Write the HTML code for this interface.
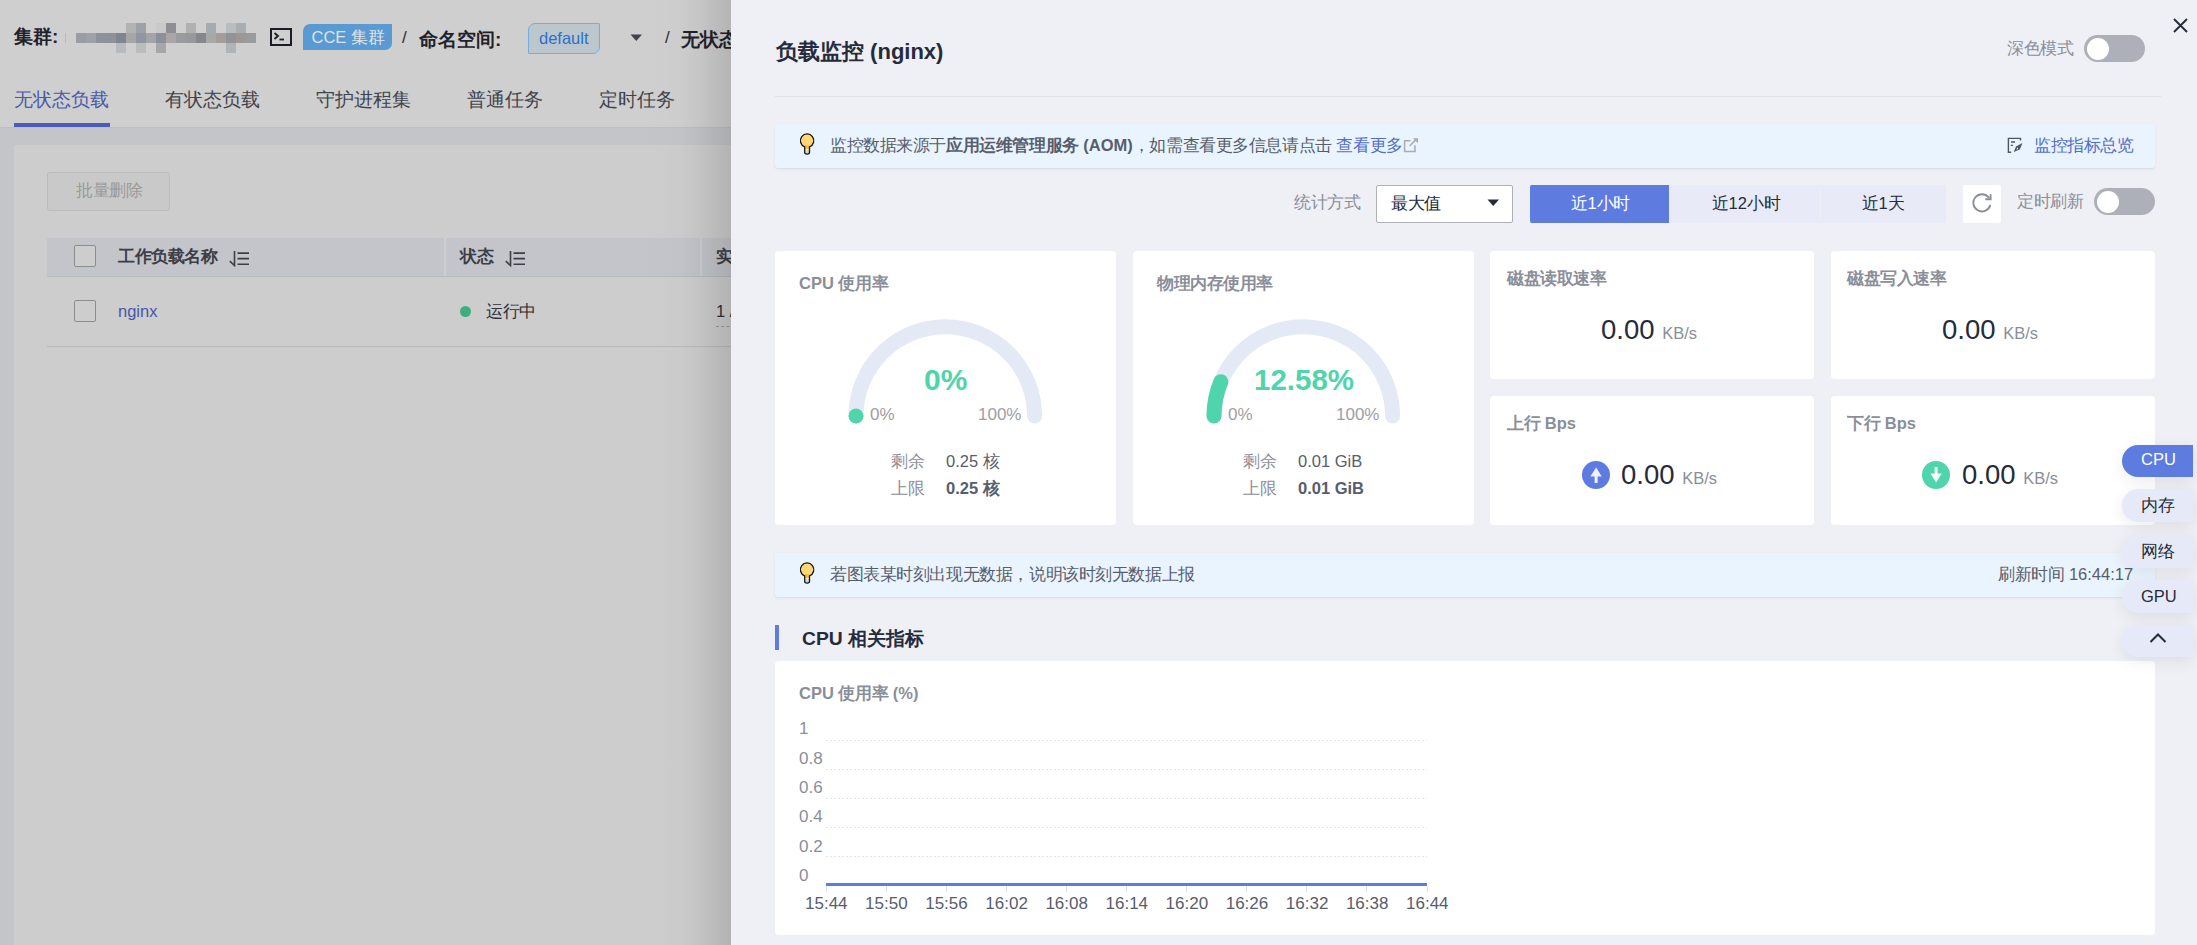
<!DOCTYPE html>
<html><head><meta charset="utf-8">
<style>
html,body{margin:0;padding:0;}
body{width:2197px;height:945px;overflow:hidden;position:relative;font-family:"Liberation Sans",sans-serif;background:#eff0f5;}
.a{position:absolute;}
.t{position:absolute;white-space:nowrap;line-height:1;}
.b{font-weight:bold;}
/* left page */
#left{position:absolute;left:0;top:0;width:731px;height:945px;background:#c4c5c9;overflow:hidden;}
#hdr{position:absolute;left:0;top:0;width:731px;height:127px;background:#cfcfcf;border-bottom:1px solid #bdbec2;}
.px{position:absolute;width:10px;height:10px;}
#card{position:absolute;left:14px;top:145px;width:740px;height:820px;background:#cdcdcd;}
/* drawer */
#drawer{position:absolute;left:731px;top:0;width:1466px;height:945px;background:#eff0f5;}
#shadow{position:absolute;left:620px;top:0;width:111px;height:945px;background:linear-gradient(to right,rgba(0,0,0,0) 0%,rgba(0,0,0,0.004) 36%,rgba(0,0,0,0.012) 54%,rgba(0,0,0,0.049) 72%,rgba(0,0,0,0.10) 90%,rgba(0,0,0,0.13) 100%);}
.card{position:absolute;background:#fff;border-radius:4px;}
.info{position:absolute;background:#eaf4fe;border-radius:3px;box-shadow:0 1px 2px rgba(80,100,160,0.15);}
.gray{color:#8a8e99;}
.dark{color:#252b3a;}
.mid{color:#575d6c;}
.pill{position:absolute;left:2122px;width:71px;height:32px;border-radius:16px 0 0 16px;background:#e6eaf8;box-shadow:0 4px 16px rgba(0,0,0,0.08);}
.c{letter-spacing:-0.42px;}
</style></head><body>
<div id="left">
  <div id="hdr">
    <div class="t b" style="left:14px;top:27px;font-size:19px;color:#1f222b;">集群:</div>
    <div class="a" style="left:65px;top:33px;width:1px;height:10px;background:#bcbcbc"></div>
<div class="px" style="left:76px;top:33px;background:#9a9ea4"></div>
<div class="px" style="left:86px;top:33px;background:#9ea1a6"></div>
<div class="px" style="left:96px;top:33px;background:#8e929b"></div>
<div class="px" style="left:106px;top:33px;background:#8d9199"></div>
<div class="px" style="left:116px;top:33px;background:#7f868f"></div>
<div class="px" style="left:126px;top:33px;background:#a5a6a8"></div>
<div class="px" style="left:136px;top:33px;background:#9095a0"></div>
<div class="px" style="left:146px;top:33px;background:#a3a4a6"></div>
<div class="px" style="left:156px;top:33px;background:#8b909a"></div>
<div class="px" style="left:166px;top:33px;background:#aba6a5"></div>
<div class="px" style="left:176px;top:33px;background:#9a9b9f"></div>
<div class="px" style="left:186px;top:33px;background:#98989b"></div>
<div class="px" style="left:196px;top:33px;background:#86878c"></div>
<div class="px" style="left:206px;top:33px;background:#a7a9a8"></div>
<div class="px" style="left:216px;top:33px;background:#a39d9b"></div>
<div class="px" style="left:226px;top:33px;background:#929396"></div>
<div class="px" style="left:236px;top:33px;background:#9d9796"></div>
<div class="px" style="left:246px;top:33px;background:#9a9b9d"></div>
<div class="px" style="left:126px;top:23px;background:#b3b3b3"></div>
<div class="px" style="left:136px;top:23px;background:#9ea1a6"></div>
<div class="px" style="left:156px;top:23px;background:#c8c9c8"></div>
<div class="px" style="left:166px;top:23px;background:#8e8f92"></div>
<div class="px" style="left:186px;top:23px;background:#b1b1b3"></div>
<div class="px" style="left:206px;top:23px;background:#a6abaf"></div>
<div class="px" style="left:226px;top:23px;background:#bbbcbf"></div>
<div class="px" style="left:236px;top:23px;background:#aaaeb1"></div>
<div class="px" style="left:116px;top:43px;background:#b6bbbf"></div>
<div class="px" style="left:136px;top:43px;background:#bbbdbc"></div>
<div class="px" style="left:156px;top:43px;background:#a7a6a8"></div>
<div class="px" style="left:226px;top:43px;background:#b0b4b7"></div>
    <svg class="a" style="left:270px;top:28px" width="22" height="18" viewBox="0 0 22 18"><rect x="1" y="1" width="20" height="16" fill="none" stroke="#1b1d24" stroke-width="2"/><path d="M4.5 5 L8 8 L4.5 11" fill="none" stroke="#1b1d24" stroke-width="1.8"/><path d="M9.5 11.5 H14" stroke="#1b1d24" stroke-width="1.8"/></svg>
    <div class="a" style="left:303px;top:24px;width:89px;height:26px;background:#5a9ad3;border-radius:7px 0 7px 0;"></div>
    <div class="t" style="left:311.5px;top:29px;font-size:16.5px;color:#dfe3e8;">CCE <span class="c">集群</span></div>
    <div class="t" style="left:402px;top:29px;font-size:17px;color:#2a2d35;">/</div>
    <div class="t b" style="left:419px;top:30px;font-size:19px;color:#1f222b;">命名空间:</div>
    <div class="a" style="left:528px;top:23px;width:70px;height:29px;background:#bcc7cd;border:1px solid #75ade0;border-radius:7px 1px 7px 1px;"></div>
    <div class="t" style="left:539px;top:30px;font-size:16.5px;color:#2a6fd0;">default</div>
    <svg class="a" style="left:630px;top:34px" width="13" height="8"><path d="M0.5 0.5 H12 L6.25 7 Z" fill="#3f434e"/></svg>
    <div class="t" style="left:665px;top:29px;font-size:17px;color:#2a2d35;">/</div>
    <div class="t b" style="left:681px;top:30px;font-size:19px;color:#1f222b;">无状态负载</div>
    <div class="t" style="left:14px;top:89.5px;font-size:19.25px;color:#4a5aa8;">无状态负载</div>
    <div class="t" style="left:165px;top:89.5px;font-size:19.25px;color:#3f434c;">有状态负载</div>
    <div class="t" style="left:316px;top:89.5px;font-size:19.25px;color:#3f434c;">守护进程集</div>
    <div class="t" style="left:467px;top:89.5px;font-size:19.25px;color:#3f434c;">普通任务</div>
    <div class="t" style="left:599px;top:89.5px;font-size:19.25px;color:#3f434c;">定时任务</div>
    <div class="a" style="left:14px;top:123px;width:96px;height:4px;background:#4a5cb8;"></div>
  </div>
  <div id="card">
    <div class="a" style="left:33px;top:27px;width:121px;height:37px;border:1px solid #bcbcbc;border-radius:3px;background:#c9c9c9;"></div>
    <div class="t" style="left:62px;top:37px;font-size:16.5px;color:#9a9a9a;"><span class="c">批量删除</span></div>
    <div class="a" style="left:33px;top:93px;width:720px;height:38px;background:#c3c5ca;border-bottom:1px solid #b8b9bd;"></div>
    <div class="a" style="left:430px;top:93px;width:2px;height:38px;background:#cdced1;"></div>
    <div class="a" style="left:686px;top:93px;width:2px;height:38px;background:#cdced1;"></div>
    <div class="a" style="left:60px;top:100px;width:20px;height:20px;border:1px solid #8c8d91;border-radius:2px;background:#cdcdcd;"></div>
    <div class="t b" style="left:104px;top:103px;font-size:16.5px;color:#3b3e46;"><span class="c">工作负载名称</span></div>
    <svg class="a" style="left:214px;top:104px" width="22" height="18" viewBox="0 0 22 18"><path d="M6.5 2 V16.5 L1.8 12.2" fill="none" stroke="#3b3e46" stroke-width="1.6"/><path d="M9.5 4.1 H21 M9.5 9.6 H21 M9.5 15.2 H21" stroke="#3b3e46" stroke-width="1.6"/></svg>
    <div class="t b" style="left:446px;top:103px;font-size:16.5px;color:#3b3e46;"><span class="c">状态</span></div>
    <svg class="a" style="left:490px;top:104px" width="22" height="18" viewBox="0 0 22 18"><path d="M6.5 2 V16.5 L1.8 12.2" fill="none" stroke="#3b3e46" stroke-width="1.6"/><path d="M9.5 4.1 H21 M9.5 9.6 H21 M9.5 15.2 H21" stroke="#3b3e46" stroke-width="1.6"/></svg>
    <div class="t b" style="left:702px;top:103px;font-size:16.5px;color:#3b3e46;"><span class="c">实例</span></div>
    <div class="a" style="left:60px;top:155px;width:20px;height:20px;border:1px solid #8c8d91;border-radius:2px;background:#cdcdcd;"></div>
    <div class="t" style="left:104px;top:158px;font-size:16.5px;color:#4857a8;">nginx</div>
    <div class="a" style="left:446px;top:161px;width:11px;height:11px;border-radius:50%;background:#3fae7e;"></div>
    <div class="t" style="left:472px;top:158px;font-size:16.5px;color:#2e3138;"><span class="c">运行中</span></div>
    <div class="t" style="left:702px;top:158px;font-size:16.5px;color:#2e3138;">1 / 1</div>
    <div class="a" style="left:702px;top:181px;width:40px;height:0;border-top:1px dashed #9a9a9a;"></div>
    <div class="a" style="left:33px;top:201px;width:720px;height:1px;background:#b8b9bd;"></div>
  </div>
</div>

<div id="shadow"></div>
<div id="drawer"></div>
<!-- header -->
<div class="t b dark" style="left:776px;top:41px;font-size:22px;">负载监控 (nginx)</div>
<div class="t gray" style="left:2007px;top:40px;font-size:16.5px;"><span class="c">深色模式</span></div>
<div class="a" style="left:2084px;top:35px;width:61px;height:27px;border-radius:14px;background:#adb0b8;"></div>
<div class="a" style="left:2087px;top:38px;width:22px;height:22px;border-radius:50%;background:#fff;"></div>
<svg class="a" style="left:2173px;top:18px" width="15" height="15" viewBox="0 0 15 15"><path d="M1 1 L14 14 M14 1 L1 14" stroke="#252b3a" stroke-width="1.9"/></svg>
<div class="a" style="left:775px;top:96px;width:1386px;height:1px;background:#dfe1e6;"></div>
<!-- info bar 1 -->
<div class="info" style="left:775px;top:124px;width:1380px;height:44px;"></div>
<svg class="a" style="left:794px;top:130px" width="26" height="28" viewBox="0 0 26 28"><path d="M10.7 16.9 A6.7 6.7 0 1 1 15.5 16.9 V22.6 Q15.5 24.1 13.1 24.1 Q10.7 24.1 10.7 22.6 Z" fill="#ffd777"/><rect x="11.1" y="15" width="4" height="4.3" fill="#ffc21a"/><rect x="10.7" y="19.3" width="4.8" height="0.7" fill="#fff"/><rect x="10.7" y="20" width="4.8" height="4.1" fill="#d9d9d9"/><path d="M10.7 16.9 A6.7 6.7 0 1 1 15.5 16.9 V22.6 Q15.5 24.1 13.1 24.1 Q10.7 24.1 10.7 22.6 Z" fill="none" stroke="#141414" stroke-width="1.3"/></svg>
<div class="t" style="left:830px;top:137px;font-size:16.5px;color:#575d6c;"><span class="c">监控数据来源于</span><b style="color:#575d6c"><span class="c">应用运维管理服务</span> (AOM)</b><span class="c">，如需查看更多信息请点击</span> <span style="color:#526ecc"><span class="c">查看更多</span></span></div>
<svg class="a" style="left:1400px;top:135px" width="20" height="20" viewBox="0 0 20 20"><path d="M10.4 5.8 H4.6 V16.5 H15 V10.3" fill="none" stroke="#a9abaf" stroke-width="1.5"/><path d="M10.1 10.5 L16 4.6" stroke="#a9abaf" stroke-width="1.5" stroke-linecap="round"/><path d="M13 3.2 H18 V8.2 Z" fill="#a9abaf"/></svg>
<svg class="a" style="left:2005px;top:135px" width="20" height="20" viewBox="0 0 20 20"><path d="M15.5 5.6 V3.4 H3.4 V17.2 H6.2" fill="none" stroke="#4f5563" stroke-width="1.4"/><path d="M6 7 H10 M5.8 10.4 H7.9" stroke="#4f5563" stroke-width="1.3"/><path d="M8.7 17 L11 11.6 L17.4 8 L14.8 14.5 Z" fill="#4f5563"/><path d="M11.2 14.6 L12.8 12.3 L13.1 14.2 Z" fill="#eaf4fe"/></svg>
<div class="t" style="left:2034px;top:137px;font-size:16.5px;color:#526ecc;"><span class="c">监控指标总览</span></div>
<!-- controls -->
<div class="t" style="left:1294px;top:194px;font-size:16.5px;color:#8a8e99;"><span class="c">统计方式</span></div>
<div class="a" style="left:1376px;top:185px;width:135px;height:36px;border:1px solid #adb0b8;border-radius:2px;background:#fff;"></div>
<div class="t" style="left:1391px;top:195px;font-size:16.5px;color:#252b3a;"><span class="c">最大值</span></div>
<svg class="a" style="left:1487px;top:199px" width="13" height="8"><path d="M0.5 0.5 H12 L6.25 7 Z" fill="#252b3a"/></svg>
<div class="a" style="left:1530px;top:185px;width:416px;height:38px;background:#e8ebf7;border-radius:2px;"></div>
<div class="a" style="left:1530px;top:185px;width:139px;height:38px;background:#5e7ce0;border-radius:2px 0 0 2px;"></div>
<div class="a" style="left:1820px;top:187px;width:1px;height:34px;background:#eef0f8;"></div>
<div class="t" style="left:1571px;top:195px;font-size:16.5px;color:#fff;"><span class="c">近</span>1<span class="c">小时</span></div>
<div class="t" style="left:1712px;top:195px;font-size:16.5px;color:#252b3a;"><span class="c">近</span>12<span class="c">小时</span></div>
<div class="t" style="left:1862px;top:195px;font-size:16.5px;color:#252b3a;"><span class="c">近</span>1<span class="c">天</span></div>
<div class="a" style="left:1963px;top:185px;width:38px;height:38px;background:#fff;border-radius:2px;"></div>
<svg class="a" style="left:1972px;top:193px" width="22" height="22" viewBox="0 0 22 22"><path d="M18.1 12.6 A8.6 8.6 0 1 1 16.6 4.3" fill="none" stroke="#8a8e99" stroke-width="1.9" stroke-linecap="round"/><path d="M13.3 6.3 H18.6 V1.3" fill="none" stroke="#8a8e99" stroke-width="1.9"/></svg>
<div class="t" style="left:2017px;top:193px;font-size:16.5px;color:#8a8e99;"><span class="c">定时刷新</span></div>
<div class="a" style="left:2094px;top:188px;width:61px;height:27px;border-radius:14px;background:#adb0b8;"></div>
<div class="a" style="left:2097px;top:191px;width:22px;height:22px;border-radius:50%;background:#fff;"></div>
<!-- cards -->
<div class="card" style="left:775px;top:251px;width:341px;height:274px;"></div>
<div class="card" style="left:1133px;top:251px;width:341px;height:274px;"></div>
<div class="card" style="left:1490px;top:251px;width:324px;height:128px;"></div>
<div class="card" style="left:1831px;top:251px;width:324px;height:128px;"></div>
<div class="card" style="left:1490px;top:396px;width:324px;height:129px;"></div>
<div class="card" style="left:1831px;top:396px;width:324px;height:129px;"></div>
<div class="t b gray" style="left:799px;top:275px;font-size:16.5px;">CPU <span class="c">使用率</span></div>
<div class="t b gray" style="left:1157px;top:275px;font-size:16.5px;"><span class="c">物理内存使用率</span></div>
<div class="t b gray" style="left:1507px;top:270px;font-size:16.5px;"><span class="c">磁盘读取速率</span></div>
<div class="t b gray" style="left:1847px;top:270px;font-size:16.5px;"><span class="c">磁盘写入速率</span></div>
<div class="t b gray" style="left:1507px;top:415px;font-size:16.5px;"><span class="c">上行</span> Bps</div>
<div class="t b gray" style="left:1847px;top:415px;font-size:16.5px;"><span class="c">下行</span> Bps</div>
<!-- gauges -->
<svg class="a" style="left:775px;top:251px" width="341" height="274" viewBox="0 0 341 274">
 <path d="M81 165 A89.3 89.3 0 0 1 259.6 165" fill="none" stroke="#e4e9f6" stroke-width="15" stroke-linecap="round"/>
 <circle cx="81" cy="165" r="7.5" fill="#50d4ab"/>
</svg>
<svg class="a" style="left:1133px;top:251px" width="341" height="274" viewBox="0 0 341 274">
 <path d="M81 165 A89.3 89.3 0 0 1 259.6 165" fill="none" stroke="#e4e9f6" stroke-width="15" stroke-linecap="round"/>
 <path d="M81 165 A89.3 89.3 0 0 1 87.8 130.8" fill="none" stroke="#50d4ab" stroke-width="15" stroke-linecap="round"/>
</svg>
<div class="t b" style="left:924px;top:365px;font-size:30px;color:#50d4ab;">0%</div>
<div class="t b" style="left:1254px;top:365px;font-size:29.5px;color:#50d4ab;">12.58%</div>
<div class="t" style="left:870px;top:406px;font-size:17px;color:#9d9ea2;">0%</div>
<div class="t" style="left:978px;top:406px;font-size:17px;color:#9d9ea2;">100%</div>
<div class="t" style="left:1228px;top:406px;font-size:17px;color:#9d9ea2;">0%</div>
<div class="t" style="left:1336px;top:406px;font-size:17px;color:#9d9ea2;">100%</div>
<div class="t gray" style="left:891px;top:453px;font-size:16.5px;"><span class="c">剩余</span></div>
<div class="t" style="left:946px;top:453px;font-size:16.5px;color:#575d6c;">0.25 <span class="c">核</span></div>
<div class="t gray" style="left:891px;top:480px;font-size:16.5px;"><span class="c">上限</span></div>
<div class="t b" style="left:946px;top:480px;font-size:16.5px;color:#575d6c;">0.25 <span class="c">核</span></div>
<div class="t gray" style="left:1243px;top:453px;font-size:16.5px;"><span class="c">剩余</span></div>
<div class="t" style="left:1298px;top:453px;font-size:16.5px;color:#575d6c;">0.01 GiB</div>
<div class="t gray" style="left:1243px;top:480px;font-size:16.5px;"><span class="c">上限</span></div>
<div class="t b" style="left:1298px;top:480px;font-size:16.5px;color:#575d6c;">0.01 GiB</div>
<!-- rate values -->
<div class="t dark" style="left:1601px;top:316px;font-size:27.5px;">0.00 <span style="font-size:16.5px;color:#8a8e99">KB/s</span></div>
<div class="t dark" style="left:1942px;top:316px;font-size:27.5px;">0.00 <span style="font-size:16.5px;color:#8a8e99">KB/s</span></div>
<div class="a" style="left:1582px;top:461px;width:28px;height:28px;border-radius:50%;background:#5e7ce0;"></div>
<svg class="a" style="left:1582px;top:461px" width="28" height="28" viewBox="0 0 28 28"><path d="M12.6 22 H15.6 V15.5 H19.8 L14.1 6.5 L8.4 15.5 H12.6 Z" fill="#eef1fb"/></svg>
<div class="t dark" style="left:1621px;top:461px;font-size:27.5px;">0.00 <span style="font-size:16.5px;color:#8a8e99">KB/s</span></div>
<div class="a" style="left:1922px;top:461px;width:28px;height:28px;border-radius:50%;background:#50d4ab;"></div>
<svg class="a" style="left:1922px;top:461px" width="28" height="28" viewBox="0 0 28 28"><path d="M12.6 6 H15.6 V12.5 H19.8 L14.1 21.5 L8.4 12.5 H12.6 Z" fill="#eefbf6"/></svg>
<div class="t dark" style="left:1962px;top:461px;font-size:27.5px;">0.00 <span style="font-size:16.5px;color:#8a8e99">KB/s</span></div>
<!-- info bar 2 -->
<div class="info" style="left:775px;top:553px;width:1380px;height:44px;"></div>
<svg class="a" style="left:794px;top:559px" width="26" height="28" viewBox="0 0 26 28"><path d="M10.7 16.9 A6.7 6.7 0 1 1 15.5 16.9 V22.6 Q15.5 24.1 13.1 24.1 Q10.7 24.1 10.7 22.6 Z" fill="#ffd777"/><rect x="11.1" y="15" width="4" height="4.3" fill="#ffc21a"/><rect x="10.7" y="19.3" width="4.8" height="0.7" fill="#fff"/><rect x="10.7" y="20" width="4.8" height="4.1" fill="#d9d9d9"/><path d="M10.7 16.9 A6.7 6.7 0 1 1 15.5 16.9 V22.6 Q15.5 24.1 13.1 24.1 Q10.7 24.1 10.7 22.6 Z" fill="none" stroke="#141414" stroke-width="1.3"/></svg>
<div class="t" style="left:830px;top:566px;font-size:16.5px;color:#575d6c;"><span class="c">若图表某时刻出现无数据，说明该时刻无数据上报</span></div>
<div class="t" style="left:1998px;top:566px;font-size:16.5px;color:#575d6c;"><span class="c">刷新时间</span> 16:44:17</div>
<!-- section -->
<div class="a" style="left:775px;top:625px;width:4px;height:25px;background:#5e7ce0;"></div>
<div class="t b dark" style="left:802px;top:629px;font-size:19.25px;">CPU 相关指标</div>
<div class="card" style="left:775px;top:661px;width:1380px;height:274px;"></div>
<div class="t b gray" style="left:799px;top:685px;font-size:16.5px;">CPU <span class="c">使用率</span> (%)</div>
<div class="a" style="left:826px;top:740px;width:601px;height:1px;background:repeating-linear-gradient(to right,#e2e4e9 0 2px,transparent 2px 4px);"></div>
<div class="a" style="left:826px;top:769px;width:601px;height:1px;background:repeating-linear-gradient(to right,#e2e4e9 0 2px,transparent 2px 4px);"></div>
<div class="a" style="left:826px;top:798px;width:601px;height:1px;background:repeating-linear-gradient(to right,#e2e4e9 0 2px,transparent 2px 4px);"></div>
<div class="a" style="left:826px;top:827px;width:601px;height:1px;background:repeating-linear-gradient(to right,#e2e4e9 0 2px,transparent 2px 4px);"></div>
<div class="a" style="left:826px;top:856px;width:601px;height:1px;background:repeating-linear-gradient(to right,#e2e4e9 0 2px,transparent 2px 4px);"></div>
<div class="t" style="left:799px;top:720.3px;font-size:17px;color:#8a8e99;">1</div>
<div class="t" style="left:799px;top:749.6px;font-size:17px;color:#8a8e99;">0.8</div>
<div class="t" style="left:799px;top:779.0px;font-size:17px;color:#8a8e99;">0.6</div>
<div class="t" style="left:799px;top:808.3px;font-size:17px;color:#8a8e99;">0.4</div>
<div class="t" style="left:799px;top:837.7px;font-size:17px;color:#8a8e99;">0.2</div>
<div class="t" style="left:799px;top:867.0px;font-size:17px;color:#8a8e99;">0</div>
<div class="a" style="left:826px;top:883px;width:601px;height:3px;background:#5e7ce0;"></div>
<div class="a" style="left:825.5px;top:886px;width:1px;height:6px;background:#dfe1e6;"></div>
<div class="t" style="left:805.0px;top:895px;font-size:17px;color:#575d6c;width:42px;text-align:center;">15:44</div>
<div class="a" style="left:885.6px;top:886px;width:1px;height:6px;background:#dfe1e6;"></div>
<div class="t" style="left:865.1px;top:895px;font-size:17px;color:#575d6c;width:42px;text-align:center;">15:50</div>
<div class="a" style="left:945.7px;top:886px;width:1px;height:6px;background:#dfe1e6;"></div>
<div class="t" style="left:925.2px;top:895px;font-size:17px;color:#575d6c;width:42px;text-align:center;">15:56</div>
<div class="a" style="left:1005.8px;top:886px;width:1px;height:6px;background:#dfe1e6;"></div>
<div class="t" style="left:985.3px;top:895px;font-size:17px;color:#575d6c;width:42px;text-align:center;">16:02</div>
<div class="a" style="left:1065.9px;top:886px;width:1px;height:6px;background:#dfe1e6;"></div>
<div class="t" style="left:1045.4px;top:895px;font-size:17px;color:#575d6c;width:42px;text-align:center;">16:08</div>
<div class="a" style="left:1126.0px;top:886px;width:1px;height:6px;background:#dfe1e6;"></div>
<div class="t" style="left:1105.5px;top:895px;font-size:17px;color:#575d6c;width:42px;text-align:center;">16:14</div>
<div class="a" style="left:1186.1px;top:886px;width:1px;height:6px;background:#dfe1e6;"></div>
<div class="t" style="left:1165.6px;top:895px;font-size:17px;color:#575d6c;width:42px;text-align:center;">16:20</div>
<div class="a" style="left:1246.2px;top:886px;width:1px;height:6px;background:#dfe1e6;"></div>
<div class="t" style="left:1225.7px;top:895px;font-size:17px;color:#575d6c;width:42px;text-align:center;">16:26</div>
<div class="a" style="left:1306.3px;top:886px;width:1px;height:6px;background:#dfe1e6;"></div>
<div class="t" style="left:1285.8px;top:895px;font-size:17px;color:#575d6c;width:42px;text-align:center;">16:32</div>
<div class="a" style="left:1366.4px;top:886px;width:1px;height:6px;background:#dfe1e6;"></div>
<div class="t" style="left:1345.9px;top:895px;font-size:17px;color:#575d6c;width:42px;text-align:center;">16:38</div>
<div class="a" style="left:1426.5px;top:886px;width:1px;height:6px;background:#dfe1e6;"></div>
<div class="t" style="left:1406.0px;top:895px;font-size:17px;color:#575d6c;width:42px;text-align:center;">16:44</div>
<!-- nav pills -->
<div class="pill" style="top:445px;background:#5e7ce0;"></div>
<div class="t" style="left:2141px;top:450.5px;font-size:16.5px;color:#fff;">CPU</div>
<div class="pill" style="top:489px;height:33px;"></div>
<div class="t" style="left:2141px;top:497px;font-size:16.5px;color:#252b3a;"><span class="c">内存</span></div>
<div class="pill" style="top:535px;height:33px;"></div>
<div class="t" style="left:2141px;top:543px;font-size:16.5px;color:#252b3a;"><span class="c">网络</span></div>
<div class="pill" style="top:580px;height:33px;"></div>
<div class="t" style="left:2141px;top:588px;font-size:16.5px;color:#252b3a;">GPU</div>
<div class="pill" style="top:625px;height:32px;"></div>
<svg class="a" style="left:2149px;top:632px" width="18" height="12" viewBox="0 0 18 12"><path d="M1.5 10 L9 2.5 L16.5 10" fill="none" stroke="#252b3a" stroke-width="2"/></svg>

</body></html>
